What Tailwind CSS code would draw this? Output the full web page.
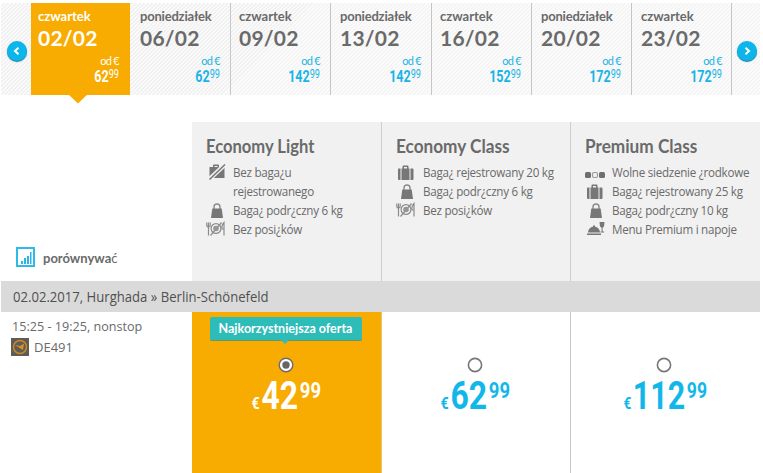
<!DOCTYPE html>
<html lang="pl">
<head>
  <meta charset="UTF-8">
  <meta name="viewport" content="width=device-width, initial-scale=1.0">
  <title>Hurghada » Berlin-Schönefeld</title>
  <script src="https://cdn.jsdelivr.net/npm/@tailwindcss/browser@4"></script>
</head>
<body class="bg-white w-[763px] h-[473px] overflow-hidden font-['Lato',sans-serif] text-[#6a6a6a]">

  <!-- shared icons -->
  <svg class="hidden">
    <symbol id="suitcase" viewBox="0 0 18 16">
      <path fill="#777" d="M1.500 3.500H3.500V15H2A1 1 0 0 1 1 14V4.500A1 1 0 0 1 1.500 3.500ZM4.500 3.500H5.500V1.500A1 1 0 0 1 6.500 .500H10.500A1 1 0 0 1 11.500 1.500V3.500H12.500V15H4.500ZM7 3.500H10V2H7ZM13.500 3.500H15.500A1 1 0 0 1 16.500 4.500V14A1 1 0 0 1 15.500 15H13.500Z"/>
    </symbol>
    <symbol id="nobag" viewBox="0 0 18 16">
      <path fill="#777" d="M2 3H5V1.500A1 1 0 0 1 6 .500H10A1 1 0 0 1 11 1.500V3H16.500V14H1.500V3ZM6.500 3H9.500V2H6.500Z"/>
      <path stroke="#f1f1f1" stroke-width="4.400" d="M1 15.500L17 .500"/>
      <path stroke="#777" stroke-width="1.500" d="M1.500 15.500L17 .500"/>
    </symbol>
    <symbol id="handbag" viewBox="0 0 18 16">
      <path fill="none" stroke="#8a8a8a" stroke-width="1.400" d="M6 6V4A3 3 0 0 1 12 4V6"/>
      <path fill="#777" d="M4.300 5.500H13.700L15 15H3Z"/>
    </symbol>
    <symbol id="nomeal" viewBox="0 0 20 16">
      <g fill="none" stroke="#8c8c8c" stroke-width="1.200">
        <path d="M.800 1.500V4Q.800 6 2.500 6Q4.200 6 4.200 4V1.500M2.500 1.500V14.500"/>
        <circle cx="10" cy="7.500" r="4.900"/>
        <path d="M18 14.500V1.500Q15.500 4 16 8H18"/>
        <path d="M4.500 14.500L15.500 1.500"/>
      </g>
      <circle cx="10" cy="7.500" r="2.800" fill="#969696"/>
    </symbol>
    <symbol id="seats" viewBox="0 0 20 8">
      <rect x="0" y="1" width="6" height="6" rx="1.500" fill="#6f6f6f"/>
      <rect x="7.500" y="1.500" width="5" height="5" rx="1.500" fill="none" stroke="#999" stroke-width="1.200"/>
      <rect x="14" y="1" width="6" height="6" rx="1.500" fill="#6f6f6f"/>
    </symbol>
    <symbol id="menu" viewBox="0 0 18 14">
      <path fill="#777" d="M1 10.500A6 6 0 0 1 13 10.500ZM6 5V3.500H8V5ZM0 11.500H14V13H0ZM12.500 0H17.500L17 4.500L15.600 5.800V9.500H17V10.500H13.500V9.500H14.600V5.800L13 4.500Z"/>
    </symbol>
  </svg>

  <!-- date strip -->
  <div class="mt-[3px] ml-px w-[759px] h-[92px] grid grid-cols-[30px_99px_101px_100px_101px_100px_100px_100px_28px] bg-[repeating-linear-gradient(135deg,#fafafa_0px,#fafafa_2px,#f1f1f1_2px,#f1f1f1_2.83px)] font-bold">
    <div class="flex items-center pl-[6px] pt-[4px]">
      <div class="w-5 h-5 rounded-full bg-[#0cb5ea] shadow-[0_1px_1px_#0a7ca0] shrink-0 flex items-center justify-center">
        <svg class="w-[8px] h-[8px]" viewBox="0 0 8 8" fill="none" stroke="#fff" stroke-width="2"><path d="M5.500 .800L2 4L5.500 7.200"/></svg>
      </div>
    </div>
    <div class="relative bg-[#f8ab00] text-white pl-[7px] pr-[11px] pt-[4px]">
      <div class="text-[13px] leading-[18px]">czwartek</div>
      <div class="text-[21px] leading-[26px] tracking-[0.2px]">02/02</div>
      <div class="text-right text-[11px] leading-[14px] mt-[3px] font-normal tracking-[-0.7px]">od €</div>
      <div class="text-right text-[16.5px] leading-[18px] origin-right scale-x-[.76] font-['Roboto',sans-serif]">62<span class="text-[12px] font-normal align-[4px] leading-none">99</span></div>
      <svg class="absolute left-[37px] top-[91px] w-[20px] h-[10px]" viewBox="0 0 20 10"><path fill="#f8ab00" d="M0 0H20L10 9.500Z"/></svg>
    </div>
    <div class="border-r border-[#c6c6c6] pl-[10px] pr-[10px] pt-[4px]">
      <div class="text-[13px] leading-[18px] tracking-[-0.2px]">poniedziałek</div>
      <div class="text-[21px] leading-[26px] tracking-[0.2px]">06/02</div>
      <div class="text-right text-[11px] leading-[14px] mt-[3px] font-normal tracking-[-0.7px] text-[#1bb4e6]">od €</div>
      <div class="text-right text-[16.5px] leading-[18px] origin-right scale-x-[.76] text-[#1bb4e6] font-['Roboto',sans-serif]">62<span class="text-[12px] font-normal align-[4px] leading-none">99</span></div>
    </div>
    <div class="border-r border-[#c6c6c6] pl-[8px] pr-[10px] pt-[4px]">
      <div class="text-[13px] leading-[18px]">czwartek</div>
      <div class="text-[21px] leading-[26px] tracking-[0.2px]">09/02</div>
      <div class="text-right text-[11px] leading-[14px] mt-[3px] font-normal tracking-[-0.7px] text-[#1bb4e6]">od €</div>
      <div class="text-right text-[16.5px] leading-[18px] origin-right scale-x-[.76] text-[#1bb4e6] font-['Roboto',sans-serif]">142<span class="text-[12px] font-normal align-[4px] leading-none">99</span></div>
    </div>
    <div class="border-r border-[#c6c6c6] pl-[9px] pr-[10px] pt-[4px]">
      <div class="text-[13px] leading-[18px] tracking-[-0.2px]">poniedziałek</div>
      <div class="text-[21px] leading-[26px] tracking-[0.2px]">13/02</div>
      <div class="text-right text-[11px] leading-[14px] mt-[3px] font-normal tracking-[-0.7px] text-[#1bb4e6]">od €</div>
      <div class="text-right text-[16.5px] leading-[18px] origin-right scale-x-[.76] text-[#1bb4e6] font-['Roboto',sans-serif]">142<span class="text-[12px] font-normal align-[4px] leading-none">99</span></div>
    </div>
    <div class="border-r border-[#c6c6c6] pl-[8px] pr-[10px] pt-[4px]">
      <div class="text-[13px] leading-[18px]">czwartek</div>
      <div class="text-[21px] leading-[26px] tracking-[0.2px]">16/02</div>
      <div class="text-right text-[11px] leading-[14px] mt-[3px] font-normal tracking-[-0.7px] text-[#1bb4e6]">od €</div>
      <div class="text-right text-[16.5px] leading-[18px] origin-right scale-x-[.76] text-[#1bb4e6] font-['Roboto',sans-serif]">152<span class="text-[12px] font-normal align-[4px] leading-none">99</span></div>
    </div>
    <div class="border-r border-[#c6c6c6] pl-[9px] pr-[10px] pt-[4px]">
      <div class="text-[13px] leading-[18px] tracking-[-0.2px]">poniedziałek</div>
      <div class="text-[21px] leading-[26px] tracking-[0.2px]">20/02</div>
      <div class="text-right text-[11px] leading-[14px] mt-[3px] font-normal tracking-[-0.7px] text-[#1bb4e6]">od €</div>
      <div class="text-right text-[16.5px] leading-[18px] origin-right scale-x-[.76] text-[#1bb4e6] font-['Roboto',sans-serif]">172<span class="text-[12px] font-normal align-[4px] leading-none">99</span></div>
    </div>
    <div class="border-r border-[#c6c6c6] pl-[9px] pr-[9px] pt-[4px]">
      <div class="text-[13px] leading-[18px]">czwartek</div>
      <div class="text-[21px] leading-[26px] tracking-[0.2px]">23/02</div>
      <div class="text-right text-[11px] leading-[14px] mt-[3px] font-normal tracking-[-0.7px] text-[#1bb4e6]">od €</div>
      <div class="text-right text-[16.5px] leading-[18px] origin-right scale-x-[.76] text-[#1bb4e6] font-['Roboto',sans-serif]">172<span class="text-[12px] font-normal align-[4px] leading-none">99</span></div>
    </div>
    <div class="flex items-center pl-[5px] pt-[4px]">
      <div class="w-5 h-5 rounded-full bg-[#0cb5ea] shadow-[0_1px_1px_#0a7ca0] shrink-0 flex items-center justify-center">
        <svg class="w-[8px] h-[8px]" viewBox="0 0 8 8" fill="none" stroke="#fff" stroke-width="2"><path d="M2.500 .800L6 4L2.500 7.200"/></svg>
      </div>
    </div>
  </div>

  <!-- fare classes -->
  <div class="mt-[27px] ml-px w-[759px] h-[159px] grid grid-cols-[191px_189px_189px_190px]">
    <div class="flex items-end pl-[15px] pb-[14px]">
      <svg class="w-[19px] h-[20px]" viewBox="0 0 19 20">
        <rect x="1" y="1" width="17" height="18" fill="#fff" stroke="#2cbbe8" stroke-width="2"/>
        <path fill="#2cb5e4" d="M5 14H7V17H5ZM8 11H10V17H8ZM11 9H13V17H11ZM14 5H15.500V17H14Z"/>
      </svg>
      <div class="ml-[8px] text-[13px] leading-[18px] font-bold">porównywa<span class="font-normal">ć</span></div>
    </div>
    <div class="bg-[#f1f1f1] pl-[14px] pt-[12px]">
      <h2 class="text-[18px] leading-[24px] font-bold whitespace-nowrap origin-left scale-x-[.92]">Economy Light</h2>
      <ul class="mt-[5px] text-[13.5px] leading-[19px] tracking-[-0.3px] whitespace-nowrap font-['Open_Sans',sans-serif]">
        <li class="flex"><svg class="shrink-0 w-[18px] h-[16px] mt-px mr-[7px] ml-[2px]"><use href="#nobag"/></svg><span class="origin-left scale-x-[.86]">Bez baga¿u<br>rejestrowanego</span></li>
        <li class="flex"><svg class="shrink-0 w-[18px] h-[16px] mt-[2px] mr-[7px] ml-[2px]"><use href="#handbag"/></svg><span class="origin-left scale-x-[.86]">Baga¿ podr¿czny 6 kg</span></li>
        <li class="flex"><svg class="shrink-0 w-[20px] h-[16px] mt-px mr-[7px]"><use href="#nomeal"/></svg><span class="origin-left scale-x-[.86]">Bez posi¿ków</span></li>
      </ul>
    </div>
    <div class="bg-[#f1f1f1] border-l border-[#cdcdcd] pl-[14px] pt-[12px]">
      <h2 class="text-[18px] leading-[24px] font-bold whitespace-nowrap origin-left scale-x-[.955]">Economy Class</h2>
      <ul class="mt-[5px] text-[13.5px] leading-[19px] tracking-[-0.3px] whitespace-nowrap font-['Open_Sans',sans-serif]">
        <li class="flex"><svg class="shrink-0 w-[18px] h-[16px] mt-[2px] mr-[8px] ml-px"><use href="#suitcase"/></svg><span class="origin-left scale-x-[.86]">Baga¿ rejestrowany 20 kg</span></li>
        <li class="flex"><svg class="shrink-0 w-[18px] h-[16px] mt-[2px] mr-[7px] ml-[2px]"><use href="#handbag"/></svg><span class="origin-left scale-x-[.86]">Baga¿ podr¿czny 6 kg</span></li>
        <li class="flex"><svg class="shrink-0 w-[20px] h-[16px] mt-px mr-[7px]"><use href="#nomeal"/></svg><span class="origin-left scale-x-[.86]">Bez posi¿ków</span></li>
      </ul>
    </div>
    <div class="bg-[#f1f1f1] border-l border-[#cdcdcd] pl-[14px] pt-[12px]">
      <h2 class="text-[18px] leading-[24px] font-bold whitespace-nowrap origin-left scale-x-[.955]">Premium Class</h2>
      <ul class="mt-[5px] text-[13.5px] leading-[19px] tracking-[-0.3px] whitespace-nowrap font-['Open_Sans',sans-serif]">
        <li class="flex"><svg class="shrink-0 w-[20px] h-[8px] mt-[8px] mr-[7px]"><use href="#seats"/></svg><span class="origin-left scale-x-[.86]">Wolne siedzenie ¿rodkowe</span></li>
        <li class="flex"><svg class="shrink-0 w-[18px] h-[16px] mt-[2px] mr-[8px] ml-px"><use href="#suitcase"/></svg><span class="origin-left scale-x-[.86]">Baga¿ rejestrowany 25 kg</span></li>
        <li class="flex"><svg class="shrink-0 w-[18px] h-[16px] mt-[2px] mr-[7px] ml-[2px]"><use href="#handbag"/></svg><span class="origin-left scale-x-[.86]">Baga¿ podr¿czny 10 kg</span></li>
        <li class="flex"><svg class="shrink-0 w-[18px] h-[14px] mt-[2px] mr-[7px] ml-[2px]"><use href="#menu"/></svg><span class="origin-left scale-x-[.86]">Menu Premium i napoje</span></li>
      </ul>
    </div>
  </div>

  <div class="ml-px w-[759px] h-[31px] bg-[#dadada] pl-[12px] text-[14px] leading-[31px] text-[#505050] font-['Open_Sans',sans-serif]">
    <div class="origin-left scale-x-[.936]">02.02.2017, Hurghada » Berlin-Schönefeld</div>
  </div>

  <!-- flight row -->
  <div class="ml-px w-[759px] h-[161px] grid grid-cols-[191px_189px_189px_190px]">
    <div class="pl-[11px] pt-[4px] text-[13px] leading-[20px] font-['Open_Sans',sans-serif]">
      <div class="origin-left scale-x-[.97]">15:25 - 19:25, nonstop</div>
      <div class="flex items-center mt-px">
        <svg class="w-[18px] h-[18px] mr-[5px] -ml-px" viewBox="0 0 18 18">
          <rect width="18" height="18" fill="#5f5b58"/>
          <circle cx="9" cy="9" r="6.500" fill="none" stroke="#c78a25" stroke-width="1.500"/>
          <path fill="#d8931d" d="M4 7L9 8L13 5.500L12 12L9.500 10.500Z"/>
        </svg>
        <span>DE491</span>
      </div>
    </div>
    <div class="bg-[#f8ab00] flex flex-col items-center pt-[5px] pr-[2px] text-white">
      <div class="relative w-[152px] h-[24px] rounded-[2px] bg-[#2ebcb9] border-b border-[#6c9655] text-center text-[12.5px] leading-[23px] font-bold whitespace-nowrap">Najkorzystniejsza oferta
        <svg class="absolute left-[70px] top-[22px] w-[10px] h-[6px]" viewBox="0 0 10 6"><path fill="#2ebcb9" d="M0 0H10L5 5Z"/></svg>
      </div>
      <svg class="w-[16px] h-[16px] mt-[16px]" viewBox="0 0 16 16">
        <circle cx="8" cy="8" r="6.800" fill="#fff" stroke="#6b6b6b" stroke-width="1.400"/>
        <circle cx="8" cy="8" r="3.700" fill="#666"/>
      </svg>
      <div class="flex items-baseline gap-[2px] mt-[4px] ml-px font-bold font-['Roboto',sans-serif] leading-[38px] scale-x-[.84]">
        <span class="text-[17px]">€</span><span class="text-[38px]">42</span><span class="text-[22px] -translate-y-[11px]">99</span>
      </div>
    </div>
    <div class="border-l border-[#e6c47a] flex flex-col items-center pt-[45px] pr-[3px] text-[#12b7ea]">
      <svg class="w-[16px] h-[16px]" viewBox="0 0 16 16"><circle cx="8" cy="8" r="6.600" fill="#fff" stroke="#777" stroke-width="1.600"/></svg>
      <div class="flex items-baseline gap-[2px] mt-[4px] ml-[2px] font-bold font-['Roboto',sans-serif] leading-[38px] scale-x-[.84]">
        <span class="text-[17px]">€</span><span class="text-[38px]">62</span><span class="text-[22px] -translate-y-[11px]">99</span>
      </div>
    </div>
    <div class="border-l border-[#c8c8c8] flex flex-col items-center pt-[45px] pr-[3px] text-[#12b7ea]">
      <svg class="w-[16px] h-[16px]" viewBox="0 0 16 16"><circle cx="8" cy="8" r="6.600" fill="#fff" stroke="#777" stroke-width="1.600"/></svg>
      <div class="flex items-baseline gap-[2px] mt-[4px] ml-[2px] font-bold font-['Roboto',sans-serif] leading-[38px] scale-x-[.8]">
        <span class="text-[17px]">€</span><span class="text-[38px]">112</span><span class="text-[22px] -translate-y-[11px]">99</span>
      </div>
    </div>
  </div>
</body>
</html>
